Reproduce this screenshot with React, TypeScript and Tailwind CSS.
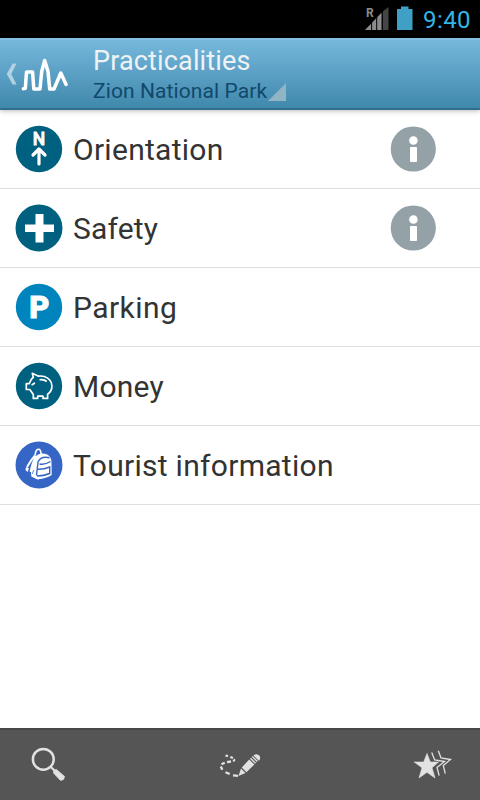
import type { ReactNode } from "react";

const font = "font-[Roboto,'Liberation_Sans',sans-serif]";

function StatusBar() {
  return (
    <div className="flex h-[38px] shrink-0 items-center justify-end bg-black pr-[9px]">
      <svg className="mr-[7px] h-[38px] w-6" viewBox="364 0 24 38">
        <path d="M364 30 L380.7 12.5 V30Z" fill="#8c8c8c" />
        <path d="M381.5 11.7 L387.5 7 V30 H381.5Z" fill="#454545" />
        <path d="M370.6 20V30M375.7 14V30M381.3 8V30" stroke="#000" strokeWidth="1" />
        <text x="365" y="17" fontSize="12" fontWeight="700" fill="#8c8c8c" fontFamily="Roboto, sans-serif">R</text>
      </svg>
      <svg className="mr-[9px] h-[38px] w-[18px]" viewBox="396 0 18 38">
        <path d="M397 9H401V6.5H408.500V9H412.500V30H397Z" fill="#409fc4" />
      </svg>
      <span className="pt-0.5 text-[24px] leading-none tracking-[0.4px] text-[#33b5e5]">9:40</span>
    </div>
  );
}

function Header() {
  return (
    <header className="z-10 flex h-[72px] shrink-0 border-t-2 border-b-2 border-t-[#84bfe4] border-b-[#316e8d] bg-linear-to-b from-[#75b8dc] to-[#4088ad] shadow-[0_1px_5px_rgba(0,0,0,0.28)]">
      <svg className="h-[68px] w-[93px] shrink-0" viewBox="0 40 93 68" fill="none">
        <path d="M12.7 63.500H16.500L11.300 74L16.500 84.500H12.700L6.700 74Z" fill="#b2d1e1" />
        <path d="M23.300 88.700L25.300 88.300L26.500 72H32.600L33.800 88.900H40L41.700 71.500L44.700 60.500L48 71.500L49.700 89H54L60.800 73L66.100 84.500" stroke="#fff" strokeWidth="3.500" strokeLinecap="round" strokeLinejoin="round" />
      </svg>
      <div className="flex flex-col pt-[5px]">
        <h1 className="text-[27px] leading-[33px] tracking-[0.15px] whitespace-nowrap text-[#eef2f5]">Practicalities</h1>
        <div className="flex">
          <span className="text-[21px] leading-[27px] tracking-[0.1px] whitespace-nowrap text-[#11496b]">Zion National Park</span>
          <svg className="h-[27px] w-[19px]" viewBox="267 78 19 27">
            <path d="M286 83V101H268Z" fill="#91b4c5" />
          </svg>
        </div>
      </div>
    </header>
  );
}

function Disc({ color, children, r = 23.2 }: { color: string; children: ReactNode; r?: number }) {
  return (
    <svg className="h-12 w-12 shrink-0" viewBox="0 0 48 48" fill="none">
      <circle cx="24" cy="24" r={r} fill={color} />
      {children}
    </svg>
  );
}

const north = (
  <Disc color="#006080">
    <text x="24" y="20.200" textAnchor="middle" fontSize="17.500" fontWeight="500" fill="#fff" stroke="#fff" strokeWidth="0.800" fontFamily="Roboto, sans-serif">N</text>
    <path d="M24 39V24.500M18 30L24 24L30 30" stroke="#fff" strokeWidth="3.200" strokeLinecap="round" strokeLinejoin="round" />
  </Disc>
);

const cross = (
  <Disc color="#006080" r={23.5}>
    <path d="M20.500 10H28.500V20.500H39V28H28.500V38.500H20.500V28H10V20.500H20.500Z" fill="#fff" />
  </Disc>
);

const parking = (
  <Disc color="#0084bd">
    <text x="14.300" y="35.200" fontSize="31" fontWeight="900" fill="#fff" stroke="#fff" strokeWidth="0.800" fontFamily="Roboto, sans-serif">P</text>
  </Disc>
);

const piggy = (
  <Disc color="#006080">
    <path d="M18.300 15.300L17.300 11.300L23.500 14.200C30 13.200 36.700 17 36.900 24C37 28 34.500 31 32.600 32.300V36.400H28V34.200H22.700V36.400H18.300V32.500L14.800 27.500H11.300V21.600H14.300C15 19 16.300 16.800 18.300 15.300Z" stroke="#fff" strokeWidth="1.700" strokeLinejoin="round" />
    <path d="M24.500 17.800Q28.500 16.800 31.700 19.500" stroke="#fff" strokeWidth="1.700" />
    <path d="M17.200 22.700L19.400 21.200" stroke="#fff" strokeWidth="1.700" strokeLinecap="round" />
  </Disc>
);

const backpack = (
  <Disc color="#3565c5" r={23.5}>
    <path d="M20.200 14.500C20.500 6.500 26.300 6.500 26 13" stroke="#fff" strokeWidth="1.600" />
    <path d="M20 14.500Q16 19 12 26M22 15Q17.500 20 15.500 31" stroke="#fff" strokeWidth="1.900" />
    <path d="M11 26L14 27L12.600 31L10.500 29Z" fill="#fff" />
    <path d="M23 13.500C31 10.500 37 15 36.500 22L36.700 34Q32 37 22.500 38.500L16.300 35.500C15.500 28 17 19 23 13.500Z" fill="#fff" />
    <path d="M34.500 16.700Q25.500 15 23 21L21.500 34.500M24.500 23Q30 24 35.500 20.500M23 28.300Q29 28.500 34.700 26V32.500Q29 35 22 35" stroke="#3565c5" strokeWidth="1.400" />
    <path d="M18.800 29L17.200 33" stroke="#3565c5" strokeWidth="0.800" />
  </Disc>
);

const items = [
  { label: "Orientation", icon: north, info: true, tracking: "tracking-[0.28px]" },
  { label: "Safety", icon: cross, info: true, tracking: "tracking-[0.15px]" },
  { label: "Parking", icon: parking, info: false, tracking: "tracking-[0.45px]" },
  { label: "Money", icon: piggy, info: false, tracking: "tracking-[0.2px]" },
  { label: "Tourist information", icon: backpack, info: false, tracking: "tracking-[0.29px]" },
];

function InfoIcon() {
  return (
    <svg className="h-12 w-12" viewBox="389 125 48 48">
      <circle cx="413.300" cy="149" r="22.600" fill="#94a2a8" />
      <circle cx="413.400" cy="140.500" r="4.300" fill="#fff" />
      <rect x="410" y="147" width="7" height="15" rx="0.800" fill="#fff" />
    </svg>
  );
}

function Toolbar() {
  return (
    <footer className="flex h-[72px] shrink-0 items-center justify-between border-t-2 border-[#484848] bg-[#555] px-6">
      <svg className="h-12 w-12" viewBox="24 741 48 48" fill="none">
        <circle cx="43.300" cy="759.300" r="10.400" stroke="#e2e2e2" strokeWidth="2.500" />
        <path d="M50.300 766.500L55 771" stroke="#e2e2e2" strokeWidth="2.200" />
        <path d="M53.900 770L56.500 769.600L64.600 776.500L63.500 779.500L60.500 780.500L53.500 773Z" fill="#e2e2e2" stroke="#e2e2e2" strokeWidth="0.700" strokeLinejoin="round" />
      </svg>
      <svg className="h-12 w-12" viewBox="216 741 48 48" fill="none">
        <path d="M225.500 755.500L228 756.200M230.300 757L233 758M233.800 759.300Q234.800 760.300 233 761M231 761.500L227 762.200M224.700 762.700L221.500 764.200M220.800 766.500L222.300 769.800M225.500 772.200L229.700 774M233 775.300L238 775.800" stroke="#e2e2e2" strokeWidth="2.300" />
        <path d="M238.500 776L241 768.600L245.500 773Z" fill="#e2e2e2" />
        <path d="M241.800 767.500L249.200 759.500L254.300 764.500L246.500 772.300Z" fill="#e2e2e2" />
        <path d="M250.500 758.300L255.500 763.200M252.300 756.500L257.300 761.400" stroke="#e2e2e2" strokeWidth="1.400" />
        <path d="M253.500 755.500Q256 753 259 755.300Q261.500 758 258.800 760.700Z" fill="#e2e2e2" />
      </svg>
      <svg className="h-12 w-12" viewBox="408 741 48 48" fill="none">
        <path d="M427 753.500L430.300 762H438.500L432 767.800L435 778L427 772.300L419 778L422 767.800L414.200 762H423.700Z" fill="#e2e2e2" stroke="#e2e2e2" strokeWidth="0.600" />
        <path d="M431.700 752.500L434.700 760L444.500 761.500L437 767.500L439.200 775.700M438.300 750.700L441 758L450.500 759.500L443.300 765.500L445.300 773.700" stroke="#e2e2e2" strokeWidth="1.300" />
      </svg>
    </footer>
  );
}

export default function App() {
  return (
    <div className={`${font} flex h-[800px] w-[480px] flex-col overflow-hidden bg-white`}>
      <StatusBar />
      <Header />
      <main className="flex-1">
        {items.map((item) => (
          <div key={item.label} className="flex h-[79px] items-center border-b border-[#dfdfdf] pr-[43px] pl-[15px]">
            {item.icon}
            <span className={`ml-[10px] flex-1 pt-0.5 text-[30px] leading-10 whitespace-nowrap text-[#333] ${item.tracking}`}>{item.label}</span>
            {item.info && <InfoIcon />}
          </div>
        ))}
      </main>
      <Toolbar />
    </div>
  );
}
